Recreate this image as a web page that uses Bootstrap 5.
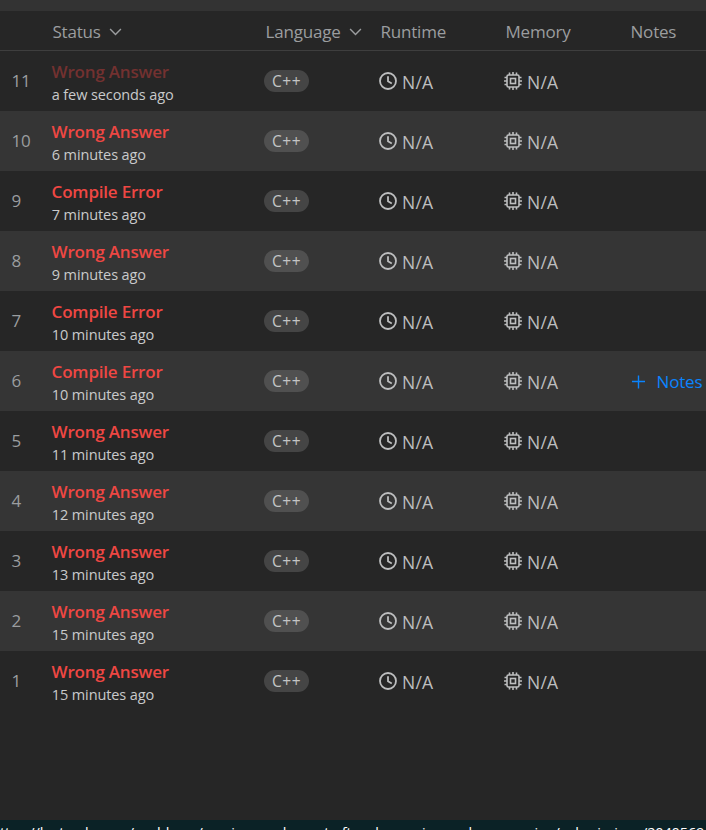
<!DOCTYPE html>
<html lang="en">
<head>
<meta charset="utf-8">
<meta name="viewport" content="width=device-width, initial-scale=1">
<title>Submissions</title>
<link href="https://cdn.jsdelivr.net/npm/bootstrap@5.3.0/dist/css/bootstrap.min.css" rel="stylesheet">
<style>
body{background:#262626;color:#bdbebf;font-family:"Segoe UI","Open Sans","Noto Sans",sans-serif;font-size:17px;height:830px}
.top-strip{height:11px;background:#333}
.sub-row{height:60px;padding-left:12px;white-space:nowrap}
.sub-row:nth-child(even){background:#353535}
.head-row{height:40px;padding:2px 0 0 12.5px;color:#9b9d9f;border-bottom:1px solid #3e3e3e;white-space:nowrap;letter-spacing:-.2px;line-height:24px}
.c-num{width:40px;color:#9b9d9f;letter-spacing:-.3px}
.sub-row .c-num{margin-left:-.5px;margin-right:.5px}
.c-status{width:213px}
.c-lang{width:115px}
.c-met{width:125px}
.verdict{color:#ef4743;font-weight:600;font-size:17px;line-height:22px;letter-spacing:-.2px;margin:4px 0 0 -.4px}
.verdict.faded{color:#733130}
.ago{font-size:14.5px;line-height:20px;letter-spacing:-.1px;color:#c9cacb;margin:2px 0 0 -.3px}
.lang-pill{display:inline-block;height:22px;line-height:23px;width:45px;margin-left:-1px;text-align:center;font-size:15.5px;letter-spacing:.5px;color:#c4c5c6;background:#454545}
.sub-row:nth-child(even) .lang-pill{background:#505050}
.met{margin-left:-1px;color:#bdbebf}
.met span{font-size:17.5px;letter-spacing:.25px;margin-left:5px;padding-top:2px}
.add-note{color:#0a84ff;letter-spacing:-.2px;padding:1px 0 0 .6px}
.link-bar{height:10px;padding-top:3px;background:#0b2226;color:#fff;font-size:14.5px;line-height:20px;white-space:nowrap;letter-spacing:-.13px}
svg{display:block;flex:none}
</style>
<script src="https://cdn.jsdelivr.net/npm/bootstrap@5.3.0/dist/js/bootstrap.bundle.min.js"></script>
</head>
<body class="d-flex flex-column overflow-hidden">
<svg width="0" height="0" class="position-absolute">
<symbol id="clock" viewBox="0 0 18 18"><g fill="none" stroke="currentColor" stroke-width="1.8"><circle cx="9" cy="9" r="8"/><path d="M9 4.2V9.3L12.8 11.5"/></g></symbol>
<symbol id="chip" viewBox="0 0 18 18"><g fill="none" stroke="currentColor" stroke-width="1.6"><rect x="3" y="3" width="12" height="12" rx="1.5"/><rect x="6.5" y="6.5" width="5" height="5"/><path d="M5.5 .5V3M9 0V3M12.5 .5V3M5.5 15V17.5M9 15V18M12.5 15V17.5M.5 5.5H3M0 9H3M.5 12.5H3M15 5.5H17.5M15 9H18M15 12.5H17.5"/></g></symbol>
<symbol id="chev" viewBox="0 0 12 8"><path d="M.6 1L6 6.6L11.4 1" fill="none" stroke="currentColor" stroke-width="1.4"/></symbol>
</svg>
<div class="top-strip flex-shrink-0"></div>
<header class="head-row d-flex align-items-center flex-shrink-0">
<div class="c-num flex-shrink-0"></div>
<div class="c-status flex-shrink-0 d-flex align-items-center gap-2">Status <svg width="13" height="8"><use href="#chev"/></svg></div>
<div class="c-lang flex-shrink-0 d-flex align-items-center gap-2">Language <svg width="13" height="8"><use href="#chev"/></svg></div>
<div class="c-met flex-shrink-0">Runtime</div>
<div class="c-met flex-shrink-0">Memory</div>
<div>Notes</div>
</header>
<main id="rows" class="flex-grow-1"></main>
<footer class="link-bar flex-shrink-0 overflow-hidden">ttps://leetcode.com/problems/maximum-element-after-decreasing-and-rearranging/submissions/2040569</footer>
<script>
const data=[["Wrong Answer","a few seconds ago"],["Wrong Answer","6 minutes ago"],["Compile Error","7 minutes ago"],["Wrong Answer","9 minutes ago"],["Compile Error","10 minutes ago"],["Compile Error","10 minutes ago"],["Wrong Answer","11 minutes ago"],["Wrong Answer","12 minutes ago"],["Wrong Answer","13 minutes ago"],["Wrong Answer","15 minutes ago"],["Wrong Answer","15 minutes ago"]];
const metric=i=>`<div class="c-met flex-shrink-0"><div class="met d-flex align-items-center"><svg width="18" height="18"><use href="#${i}"/></svg><span>N/A</span></div></div>`;
document.getElementById("rows").innerHTML=data.map(([s,t],i)=>`<div class="sub-row d-flex align-items-center">
<div class="c-num flex-shrink-0">${11-i}</div>
<div class="c-status flex-shrink-0"><div class="verdict ${i?"":"faded"}">${s}</div><div class="ago">${t}</div></div>
<div class="c-lang flex-shrink-0"><span class="lang-pill rounded-pill">C++</span></div>
${metric("clock")}${metric("chip")}
${i===5?'<div class="add-note d-flex align-items-center"><svg width="14" height="14" viewBox="0 0 14 14"><path d="M7.5 .5V13.5M1 6.5H14" stroke="currentColor" stroke-width="1.4"/></svg><span class="ms-2 ps-1">Notes</span></div>':""}
</div>`).join("");
</script>
</body>
</html>
